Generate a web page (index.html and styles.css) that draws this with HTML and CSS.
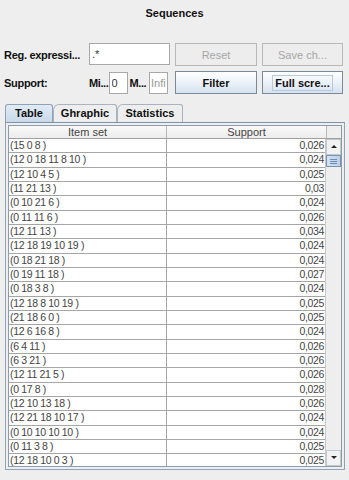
FILE: index.html
```html
<!DOCTYPE html>
<html lang="en">
<head>
  <meta charset="UTF-8">
  <title>Sequences</title>
  <link rel="stylesheet" href="styles.css">
</head>
<body>
  <div class="window">
    <h1 class="title">Sequences</h1>

    <div class="form">
      <label class="label">Reg. expressi...</label>
      <input class="field" type="text" value=".*">
      <button class="btn" disabled>Reset</button>
      <button class="btn" disabled>Save ch...</button>

      <label class="label">Support:</label>
      <div class="range">
        <span class="mini">Mi...</span>
        <input class="field small" type="text" value="0">
        <span class="mini">M...</span>
        <input class="field small wide" type="text" value="Infi">
      </div>
      <button class="btn active">Filter</button>
      <button class="btn active"><span class="focus">Full scre...</span></button>
    </div>

    <div class="tabs">
      <div class="tab selected">Table</div>
      <div class="tab">Ghraphic</div>
      <div class="tab">Statistics</div>
    </div>

    <div class="panel">
      <div class="scroll">
        <div class="grid">
          <div class="head">
            <div class="hcell">Item set</div>
            <div class="hcell">Support</div>
            <div class="corner"></div>
          </div>
          <div class="body">
            <div class="rows" id="rows"></div>
            <div class="scrollbar">
              <div class="arrow up"></div>
              <div class="thumb"><span></span><span></span><span></span></div>
              <div class="track"></div>
              <div class="arrow down"></div>
            </div>
          </div>
        </div>
      </div>
    </div>
  </div>

  <script>
    const data = [
      ['(15 0 8 )', '0,026'],
      ['(12 0 18 11 8 10 )', '0,024'],
      ['(12 10 4 5 )', '0,025'],
      ['(11 21 13 )', '0,03'],
      ['(0 10 21 6 )', '0,024'],
      ['(0 11 11 6 )', '0,026'],
      ['(12 11 13 )', '0,034'],
      ['(12 18 19 10 19 )', '0,024'],
      ['(0 18 21 18 )', '0,024'],
      ['(0 19 11 18 )', '0,027'],
      ['(0 18 3 8 )', '0,024'],
      ['(12 18 8 10 19 )', '0,025'],
      ['(21 18 6 0 )', '0,025'],
      ['(12 6 16 8 )', '0,024'],
      ['(6 4 11 )', '0,026'],
      ['(6 3 21 )', '0,026'],
      ['(12 11 21 5 )', '0,026'],
      ['(0 17 8 )', '0,028'],
      ['(12 10 13 18 )', '0,026'],
      ['(12 21 18 10 17 )', '0,024'],
      ['(0 10 10 10 10 )', '0,024'],
      ['(0 11 3 8 )', '0,025'],
      ['(12 18 10 0 3 )', '0,025']
    ];

    const rows = document.getElementById('rows');
    data.forEach(([items, support]) => {
      const row = document.createElement('div');
      row.className = 'row';
      row.innerHTML = `<div class="cell">${items}</div><div class="cell num">${support}</div>`;
      rows.appendChild(row);
    });
  </script>
</body>
</html>
```

FILE: styles.css
```css
body {
  margin: 0;
  background: #eeeeee;
  font-family: "Liberation Sans", Arial, sans-serif;
  color: #222;
}

.window {
  width: 349px;
  height: 480px;
  overflow: hidden;
}

.title {
  margin: 0;
  padding-top: 7px;
  height: 36px;
  box-sizing: border-box;
  text-align: center;
  font-size: 11px;
  font-weight: bold;
  color: #111;
}

/* Filter form */
.form {
  display: grid;
  grid-template-columns: 80px 81px 82px 81px;
  grid-template-rows: 23px 23px;
  column-gap: 5px;
  row-gap: 5px;
  padding: 7px 0 0 4px;
}

.label {
  display: flex;
  align-items: center;
  font-size: 11px;
  font-weight: bold;
  color: #111;
  letter-spacing: -0.3px;
  white-space: nowrap;
}

.field {
  box-sizing: border-box;
  height: 22px;
  margin: 0;
  padding: 0 2px;
  border: 1px solid #a8a8a8;
  background: #fff;
  font-family: inherit;
  font-size: 11px;
  color: #333;
}

.range {
  display: flex;
  align-items: center;
  height: 23px;
}

.range .mini {
  font-size: 11px;
  font-weight: bold;
  color: #111;
  letter-spacing: -0.4px;
  width: 21px;
}

.range .mini + .field {
  width: 19px;
  margin-right: 2px;
}

.range .wide {
  width: 20px;
  color: #999;
  margin-right: 0;
  padding: 0 1px;
}

.btn {
  box-sizing: border-box;
  height: 23px;
  margin: 0;
  padding: 0;
  border: 1px solid #b8b8b8;
  background: #ededed;
  font-family: inherit;
  font-size: 11px;
  color: #a6a6a6;
}

.btn.active {
  border-color: #7a8a99;
  background: linear-gradient(to bottom, #ffffff, #eef3f9 45%, #d5e2ef);
  font-weight: bold;
  color: #111;
}

.focus {
  padding: 1px 2px;
  border: 1px solid #b9c9dc;
}

/* Tabs */
.tabs {
  display: flex;
  margin: 10px 0 0 5px;
  height: 18px;
}

.tab {
  box-sizing: border-box;
  height: 18px;
  padding-top: 2px;
  border: 1px solid #a8b4c2;
  border-bottom: none;
  border-radius: 3px 3px 0 0;
  background: #eeeeee;
  font-size: 11px;
  font-weight: bold;
  color: #111;
  text-align: center;
}

.tab:nth-child(1) { width: 48px; }
.tab:nth-child(2) { width: 64px; border-radius: 6px 3px 0 0; }
.tab:nth-child(3) { width: 66px; border-radius: 6px 3px 0 0; }

.tab.selected {
  background: linear-gradient(to bottom, #e2ebf4, #c9d9e9);
  border-color: #8ea3b9;
}

/* Table panel */
.panel {
  box-sizing: border-box;
  width: 340px;
  height: 348px;
  margin-left: 5px;
  padding: 2px;
  border: 1px solid #8ea3b9;
  border-top-color: #7c93ab;
}

.scroll {
  box-sizing: border-box;
  height: 342px;
  border: 1px solid #8e9bab;
  background: #fff;
  overflow: hidden;
}

.head {
  display: grid;
  grid-template-columns: 158px 160px 16px;
  height: 13px;
  background: #eeeeee;
}

.hcell {
  border-right: 1px solid #b8b8b8;
  border-bottom: 1px solid #a0a0a0;
  background: linear-gradient(to bottom, #fafafa, #ececec);
  font-size: 11px;
  line-height: 12px;
  text-align: center;
  color: #444;
}

.corner {
  border-bottom: 1px solid #a0a0a0;
  background: #eeeeee;
}

.body {
  display: flex;
  height: 327px;
}

.rows {
  width: 318px;
  overflow: hidden;
}

.row {
  display: grid;
  grid-template-columns: 158px 160px;
  height: 14.33px;
  box-sizing: border-box;
  border-bottom: 1px solid #a6a6a6;
}

.cell {
  padding: 0 2px 0 1px;
  border-right: 1px solid #a6a6a6;
  font-size: 10.5px;
  line-height: 13px;
  letter-spacing: -0.35px;
  color: #444;
  white-space: nowrap;
}

.cell.num {
  text-align: right;
}

/* Scrollbar */
.scrollbar {
  display: flex;
  flex-direction: column;
  width: 16px;
  background: #eeeeee;
  border-left: 1px solid #c8c8c8;
  box-sizing: border-box;
}

.arrow {
  height: 14px;
  border: 1px solid #c0c8d2;
  background: #f2f2f2;
  position: relative;
}

.arrow::after {
  content: "";
  position: absolute;
  left: 4px;
  top: 5px;
  border-left: 3px solid transparent;
  border-right: 3px solid transparent;
}

.arrow.up::after {
  border-bottom: 3px solid #222;
}

.arrow.down::after {
  border-top: 3px solid #222;
}

.thumb {
  box-sizing: border-box;
  height: 12px;
  border: 1px solid #7b93b3;
  background: linear-gradient(to right, #d4e1ef, #bcd0e6);
  display: flex;
  flex-direction: column;
  align-items: center;
  justify-content: center;
  gap: 1px;
}

.thumb span {
  width: 7px;
  height: 1px;
  background: #6f8cb2;
}

.track {
  flex: 1;
}
```
